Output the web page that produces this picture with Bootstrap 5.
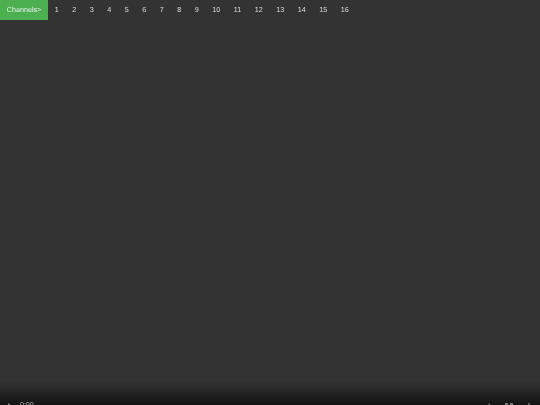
<!DOCTYPE html>
<html lang="en">
<head>
<meta charset="utf-8">
<link href="https://cdn.jsdelivr.net/npm/bootstrap@5.3.0/dist/css/bootstrap.min.css" rel="stylesheet">
<style>
html,body{height:405px;overflow:hidden;}
body{background:#333;font-family:"Liberation Sans",Arial,sans-serif;font-size:7.2px;color:#ddd;text-rendering:geometricPrecision;}
.stage{height:405px;}
.chan-bar{height:20px;}
.chan-label{background:#4caf50;color:#e8f5e9;width:48px;height:20px;font-size:7.2px;line-height:20px;filter:blur(.25px);}
.chan-bar .chan-item{color:#ddd;font-size:7.2px;line-height:20px;padding:0 6.75px;text-decoration:none;filter:blur(.25px);}
.player{height:24px;background:linear-gradient(to bottom,rgba(0,0,0,0),rgba(0,0,0,.62));overflow:hidden;padding-top:21px;}
.time-text{color:#bbb;font-size:7px;line-height:8px;margin-left:7px;filter:blur(.25px);}
.play-ico{width:5px;height:7px;fill:#888;margin-left:8px;margin-top:1px;}
.ctl-ico{width:8px;height:8px;fill:#777;margin-top:1px;}
.gap-vol{margin-right:12px;}
.gap-full{margin-right:12px;}
.gap-end{margin-right:7px;}
</style>
</head>
<body>
<div class="stage d-flex flex-column">
  <nav class="chan-bar d-flex align-items-center">
    <div class="chan-label text-center">Channels&gt;</div>
    <div class="d-flex">
      <a class="chan-item" href="#">1</a><a class="chan-item" href="#">2</a><a class="chan-item" href="#">3</a><a class="chan-item" href="#">4</a><a class="chan-item" href="#">5</a><a class="chan-item" href="#">6</a><a class="chan-item" href="#">7</a><a class="chan-item" href="#">8</a><a class="chan-item" href="#">9</a><a class="chan-item" href="#">10</a><a class="chan-item" href="#">11</a><a class="chan-item" href="#">12</a><a class="chan-item" href="#">13</a><a class="chan-item" href="#">14</a><a class="chan-item" href="#">15</a><a class="chan-item" href="#">16</a>
    </div>
  </nav>
  <div class="flex-grow-1"></div>
  <div class="player d-flex align-items-start">
    <svg class="play-ico" viewBox="0 0 5 7"><path d="M0 0l5 3.5L0 7z"/></svg>
    <span class="time-text">0:00</span>
    <div class="flex-grow-1"></div>
    <svg class="ctl-ico gap-vol" viewBox="0 0 8 8"><path d="M0 3h2l3-3v8L2 5H0zM6 2l1 2-1 2z"/></svg>
    <svg class="ctl-ico gap-full" viewBox="0 0 8 8"><path d="M0 0h3v3H0zM5 0h3v3H5z"/></svg>
    <svg class="ctl-ico gap-end" viewBox="0 0 8 8"><circle cx="4" cy="1" r="1"/><circle cx="4" cy="4" r="1"/></svg>
  </div>
</div>
<script src="https://cdn.jsdelivr.net/npm/bootstrap@5.3.0/dist/js/bootstrap.bundle.min.js"></script>
</body>
</html>
